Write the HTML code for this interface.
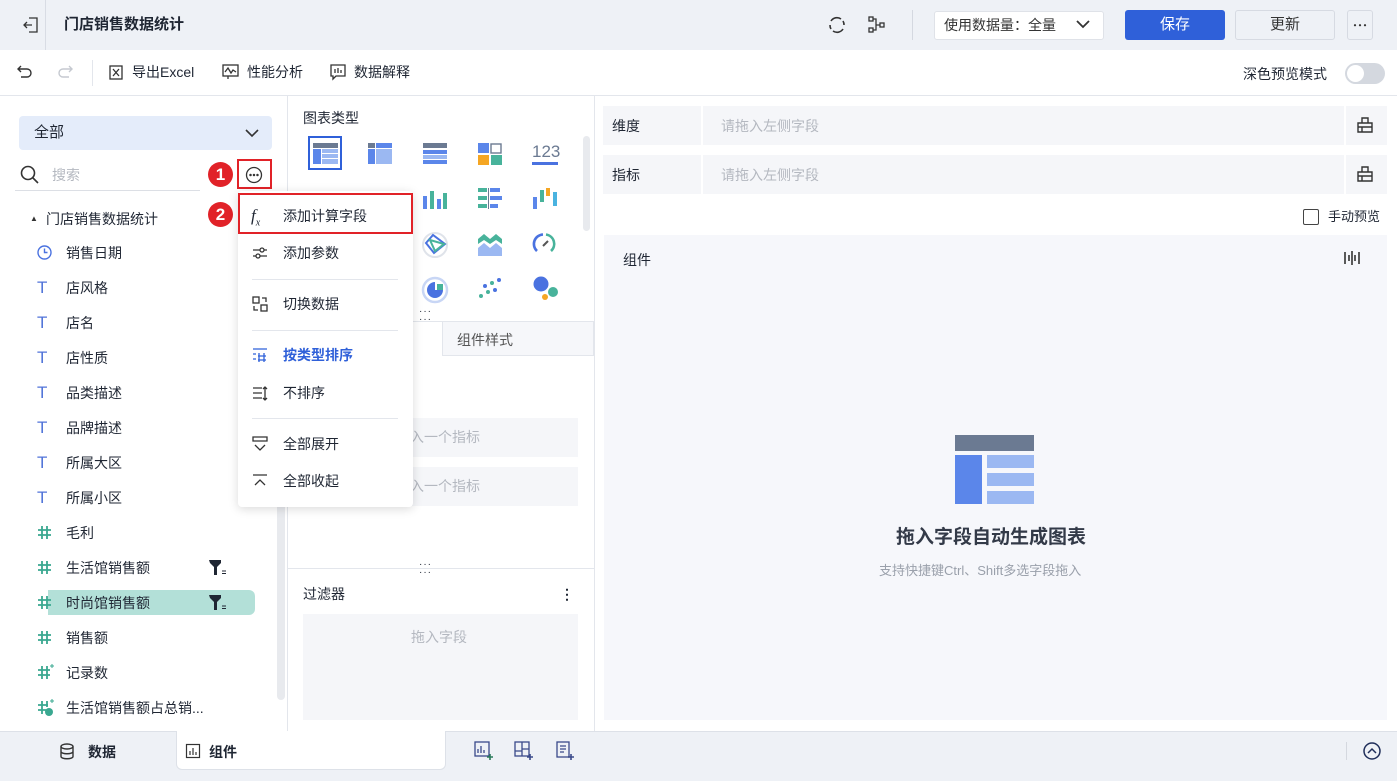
<!DOCTYPE html>
<html><head><meta charset="utf-8"><style>
*{box-sizing:border-box;margin:0;padding:0}
body{width:1397px;height:781px;position:relative;overflow:hidden;background:#fff;font-family:"Liberation Sans","Noto Sans CJK SC",sans-serif;font-size:14px;color:#1f2633}
.a{position:absolute}
.t{position:absolute;white-space:nowrap;line-height:20px}
svg{position:absolute;overflow:visible}
</style></head><body>
<!-- top bar -->
<div class="a" style="left:0;top:0;width:1397px;height:50px;background:#eef1f6"></div>
<svg style="left:22px;top:16px" width="18" height="18" viewBox="0 0 18 18" fill="none" stroke="#333" stroke-width="1.3"><path d="M7 2h8v14H7M2 9h8M5 6L2 9l3 3"/></svg>
<div class="a" style="left:45px;top:0;width:1px;height:50px;background:#d8dce4"></div>
<div class="t" style="left:64px;top:15px;font-weight:bold;font-size:15px">门店销售数据统计</div>
<svg style="left:827px;top:15px" width="20" height="20" viewBox="0 0 20 20" fill="none" stroke="#333" stroke-width="1.6"><path d="M4 6a7 7 0 0 1 10-2M16 14a7 7 0 0 1-10 2M3 10a7 7 0 0 0 1 4M17 10a7 7 0 0 0-1-4"/></svg>
<svg style="left:868px;top:16px" width="18" height="18" viewBox="0 0 18 18" fill="none" stroke="#333" stroke-width="1.3"><rect x="1" y="1" width="4" height="4"/><rect x="1" y="12" width="4" height="4"/><rect x="12" y="7" width="4" height="4"/><path d="M5 3h3v11H5M8 9h4"/></svg>
<div class="a" style="left:912px;top:10px;width:1px;height:30px;background:#d4d8e0"></div>
<div class="a" style="left:934px;top:11px;width:170px;height:29px;background:#fff;border:1px solid #dfe2e8;border-radius:3px"></div>
<div class="t" style="left:944px;top:15px;color:#333">使用数据量：全量</div>
<svg style="left:1076px;top:19px" width="14" height="10" viewBox="0 0 14 10" fill="none" stroke="#333" stroke-width="1.8"><path d="M1 2l6 6 6-6"/></svg>
<div class="a" style="left:1125px;top:10px;width:100px;height:30px;background:#2f60d9;border-radius:3px;color:#fff;text-align:center;line-height:30px;font-size:15px">保存</div>
<div class="a" style="left:1235px;top:10px;width:100px;height:30px;background:#eef1f6;border:1px solid #d6dae2;border-radius:3px;color:#333;text-align:center;line-height:28px;font-size:15px">更新</div>
<div class="a" style="left:1347px;top:10px;width:26px;height:30px;border:1px solid #d6dae2;border-radius:3px"></div>
<svg style="left:1353px;top:24px" width="14" height="3" fill="#333"><circle cx="2" cy="1.2" r="1.1"/><circle cx="7" cy="1.2" r="1.1"/><circle cx="12" cy="1.2" r="1.1"/></svg>
<!-- toolbar -->
<div class="a" style="left:0;top:95px;width:1397px;height:1px;background:#e3e6ec"></div>
<svg style="left:17px;top:65px" width="16" height="14" viewBox="0 0 16 14" fill="none" stroke="#333" stroke-width="1.4"><path d="M4 1L1 4l3 3M1 4h9a4 4 0 0 1 0 8H4"/></svg>
<svg style="left:57px;top:65px" width="16" height="14" viewBox="0 0 16 14" fill="none" stroke="#c5c9d0" stroke-width="1.4"><path d="M12 1l3 3-3 3M15 4H6a4 4 0 0 0 0 8h6"/></svg>
<div class="a" style="left:92px;top:60px;width:1px;height:26px;background:#e3e6ec"></div>
<svg style="left:109px;top:65px" width="14" height="15" viewBox="0 0 14 15" fill="none" stroke="#333" stroke-width="1.3"><rect x="1" y="1" width="12" height="13"/><path d="M4 4l6 7M10 4l-6 7"/></svg>
<div class="t" style="left:132px;top:62px">导出Excel</div>
<svg style="left:222px;top:64px" width="17" height="16" viewBox="0 0 17 16" fill="none" stroke="#333" stroke-width="1.3"><rect x="1" y="1" width="15" height="11"/><path d="M3 8l3-4 3 5 2-3 3 2M6 12v3"/></svg>
<div class="t" style="left:247px;top:62px">性能分析</div>
<svg style="left:330px;top:64px" width="16" height="16" viewBox="0 0 16 16" fill="none" stroke="#333" stroke-width="1.3"><path d="M1 1h14v11H6l-3 3v-3H1z M5 5v4M8 4v5M11 6v3"/></svg>
<div class="t" style="left:354px;top:62px">数据解释</div>
<div class="t" style="left:1243px;top:64px">深色预览模式</div>
<div class="a" style="left:1345px;top:63px;width:40px;height:21px;background:#d4d8df;border-radius:11px"></div>
<div class="a" style="left:1347px;top:65px;width:17px;height:17px;background:#fff;border-radius:50%"></div>
<!-- left panel -->
<div class="a" style="left:19px;top:116px;width:253px;height:34px;background:#e4ecfa;border-radius:4px"></div>
<div class="t" style="left:34px;top:123px;font-size:15px">全部</div>
<svg style="left:245px;top:129px" width="14" height="9" viewBox="0 0 14 9" fill="none" stroke="#333" stroke-width="1.6"><path d="M1 1l6 6 6-6"/></svg>
<svg style="left:20px;top:165px" width="20" height="20" viewBox="0 0 20 20" fill="none" stroke="#333" stroke-width="1.6"><circle cx="8" cy="8" r="6.5"/><path d="M13 13l5 5"/></svg>
<div class="t" style="left:52px;top:165px;color:#b4b8c0">搜索</div>
<div class="a" style="left:15px;top:190px;width:185px;height:1px;background:#dcdfe5"></div>
<div class="a" style="left:237px;top:159px;width:35px;height:30px;border:2px solid #e12228"></div>
<svg style="left:245px;top:166px" width="18" height="18" viewBox="0 0 18 18" fill="none" stroke="#333" stroke-width="1.3"><circle cx="9" cy="9" r="7.5"/><circle cx="5.5" cy="9" r=".6" fill="#333"/><circle cx="9" cy="9" r=".6" fill="#333"/><circle cx="12.5" cy="9" r=".6" fill="#333"/></svg>
<div class="a" style="left:208px;top:162px;width:25px;height:25px;background:#e12228;border-radius:50%;color:#fff;font-weight:bold;text-align:center;line-height:25px;font-size:17px">1</div>
<div class="a" style="left:208px;top:202px;width:25px;height:25px;background:#e12228;border-radius:50%;color:#fff;font-weight:bold;text-align:center;line-height:25px;font-size:17px">2</div>
<div class="t" style="left:30px;top:209px;font-size:8px;color:#333">▲</div>
<div class="t" style="left:46px;top:209px">门店销售数据统计</div>
<svg style="left:37px;top:245px" width="15" height="15" viewBox="0 0 15 15" fill="none" stroke="#4a72e0" stroke-width="1.4"><circle cx="7.5" cy="7.5" r="6.5"/><path d="M7.5 3.5v4h3"/></svg>
<div class="t" style="left:66px;top:243px">销售日期</div>
<div style="position:absolute;left:0;top:278px">
<div class="t" style="left:37px;top:0;color:#5073d8;font-size:17px">T</div><div class="t" style="left:66px;top:0">店风格</div>
<div class="t" style="left:37px;top:35px;color:#5073d8;font-size:17px">T</div><div class="t" style="left:66px;top:35px">店名</div>
<div class="t" style="left:37px;top:70px;color:#5073d8;font-size:17px">T</div><div class="t" style="left:66px;top:70px">店性质</div>
<div class="t" style="left:37px;top:105px;color:#5073d8;font-size:17px">T</div><div class="t" style="left:66px;top:105px">品类描述</div>
<div class="t" style="left:37px;top:140px;color:#5073d8;font-size:17px">T</div><div class="t" style="left:66px;top:140px">品牌描述</div>
<div class="t" style="left:37px;top:175px;color:#5073d8;font-size:17px">T</div><div class="t" style="left:66px;top:175px">所属大区</div>
<div class="t" style="left:37px;top:210px;color:#5073d8;font-size:17px">T</div><div class="t" style="left:66px;top:210px">所属小区</div>
</div>
<div class="a" style="left:48px;top:590px;width:207px;height:25px;background:#b3e0d8;border-radius:0 6px 6px 0"></div>
<svg style="left:38px;top:526px" width="13" height="13" fill="none" stroke="#3aa890" stroke-width="1.8"><path d="M0 4h13M0 9h13M4 0v13M9 0v13"/></svg>
<div class="t" style="left:66px;top:523px">毛利</div>
<svg style="left:38px;top:561px" width="13" height="13" fill="none" stroke="#3aa890" stroke-width="1.8"><path d="M0 4h13M0 9h13M4 0v13M9 0v13"/></svg>
<div class="t" style="left:66px;top:558px">生活馆销售额</div>
<svg style="left:209px;top:560px" width="18" height="16"><path d="M0 0h12v3L8 7v8H5V7L1 3z" fill="#1f2633"/><path d="M13 11h4M13 13.5h4" stroke="#1f2633" stroke-width="1"/></svg>
<svg style="left:38px;top:596px" width="13" height="13" fill="none" stroke="#3aa890" stroke-width="1.8"><path d="M0 4h13M0 9h13M4 0v13M9 0v13"/></svg>
<div class="t" style="left:66px;top:593px">时尚馆销售额</div>
<svg style="left:209px;top:595px" width="18" height="16"><path d="M0 0h12v3L8 7v8H5V7L1 3z" fill="#1f2633"/><path d="M13 11h4M13 13.5h4" stroke="#1f2633" stroke-width="1"/></svg>
<svg style="left:38px;top:631px" width="13" height="13" fill="none" stroke="#3aa890" stroke-width="1.8"><path d="M0 4h13M0 9h13M4 0v13M9 0v13"/></svg>
<div class="t" style="left:66px;top:628px">销售额</div>
<svg style="left:38px;top:666px" width="16" height="13" fill="none" stroke="#3aa890" stroke-width="1.8"><path d="M0 4h12M0 9h12M4 0v13M9 0v13"/><path d="M14 -2v4M12 0h4" stroke-width="1"/></svg>
<div class="t" style="left:66px;top:663px">记录数</div>
<svg style="left:38px;top:701px" width="16" height="15" fill="none" stroke="#3aa890" stroke-width="1.8"><path d="M0 4h10M0 9h8M4 0v13M9 0v6"/><path d="M14 -2v4M12 0h4" stroke-width="1"/><circle cx="11" cy="11" r="4" fill="#3aa890" stroke="none"/></svg>
<div class="t" style="left:66px;top:698px">生活馆销售额占总销...</div>
<div class="a" style="left:277px;top:195px;width:8px;height:505px;background:#e8eaee;border-radius:4px"></div>
<div class="a" style="left:287px;top:96px;width:1px;height:635px;background:#e3e6ec"></div>
<!-- middle -->
<div class="t" style="left:303px;top:108px">图表类型</div>
<div class="a" style="left:308px;top:136px;width:34px;height:34px;border:2px solid #2f60d9"></div>
<svg style="left:313px;top:143px" width="25" height="21"><rect width="25" height="5" fill="#6b7a92"/><rect y="6" width="8" height="15" fill="#5b86ea"/><rect x="9" y="6" width="16" height="4" fill="#9bb8f2"/><rect x="9" y="11" width="16" height="4" fill="#9bb8f2"/><rect x="9" y="16" width="16" height="5" fill="#9bb8f2"/></svg>
<svg style="left:368px;top:143px" width="24" height="21"><rect width="7" height="5" fill="#6b7a92"/><rect x="8" width="16" height="5" fill="#5b86ea"/><rect y="6" width="7" height="15" fill="#5b86ea"/><rect x="8" y="6" width="16" height="15" fill="#9bb8f2"/></svg>
<svg style="left:423px;top:143px" width="24" height="21"><rect width="24" height="5" fill="#6b7a92"/><rect y="7" width="24" height="4" fill="#5b86ea"/><rect y="12" width="24" height="4" fill="#9bb8f2"/><rect y="17" width="24" height="4" fill="#5b86ea"/></svg>
<svg style="left:478px;top:143px" width="24" height="22"><rect width="11" height="10" fill="#5b86ea"/><rect x="13" y="1" width="10" height="9" fill="#fff" stroke="#6b7a92" stroke-width="1.4"/><rect y="12" width="11" height="10" fill="#f5a623"/><rect x="13" y="12" width="11" height="10" fill="#48b39b"/></svg>
<div class="t" style="left:532px;top:142px;color:#6b7a92;font-size:17px">123</div>
<div class="a" style="left:532px;top:162px;width:26px;height:3px;background:#4a72e0"></div>
<svg style="left:423px;top:188px" width="24" height="21"><rect x="0" y="8" width="4" height="13" fill="#5b86ea"/><rect x="7" y="3" width="4" height="18" fill="#48b39b"/><rect x="14" y="11" width="4" height="10" fill="#5b86ea"/><rect x="20" y="5" width="4" height="16" fill="#48b39b"/></svg>
<svg style="left:478px;top:188px" width="24" height="21"><rect x="0" y="0" width="9" height="4" fill="#48b39b"/><rect x="12" y="0" width="10" height="4" fill="#5b86ea"/><rect x="0" y="8" width="9" height="4" fill="#48b39b"/><rect x="12" y="8" width="12" height="4" fill="#5b86ea"/><rect x="0" y="16" width="9" height="4" fill="#48b39b"/><rect x="12" y="16" width="8" height="4" fill="#5b86ea"/><rect x="10" y="0" width="1" height="21" fill="#6b7a92"/></svg>
<svg style="left:533px;top:188px" width="24" height="21"><rect x="0" y="9" width="4" height="12" fill="#5b86ea"/><rect x="7" y="2" width="4" height="12" fill="#48b39b"/><rect x="13" y="0" width="4" height="8" fill="#f5a623"/><rect x="20" y="4" width="4" height="14" fill="#4ab3e0"/></svg>
<svg style="left:421px;top:231px" width="28" height="28" fill="none" stroke-width="2"><circle cx="14" cy="14" r="12" stroke="#dfe3ea"/><path d="M5 12L12 4l12 9-11 9z" stroke="#4a72e0"/><path d="M9 9l14 4-9 7z" stroke="#48b39b"/></svg>
<svg style="left:477px;top:232px" width="26" height="24"><path d="M1 7l6-5 6 5 6-5 6 5v5l-6-4-6 4-6-4-6 4z" fill="#48b39b"/><path d="M1 16l6-5 6 5 6-5 6 5v8H1z" fill="#9bb8f2"/></svg>
<svg style="left:531px;top:231px" width="26" height="26" fill="none" stroke-width="2.6"><path d="M6 20A9.5 9.5 0 0 1 12 3.5" stroke="#4a72e0"/><path d="M15 3.5A9.5 9.5 0 0 1 20 20" stroke="#48b39b"/><path d="M12 15l5-5" stroke="#555" stroke-width="2"/></svg>
<svg style="left:421px;top:276px" width="28" height="28"><circle cx="14" cy="14" r="12" fill="none" stroke="#c8d6f5" stroke-width="2.5"/><path d="M14 6a8 8 0 1 0 8 8h-8z" fill="#4a72e0"/><path d="M16 8h6v6h-6z" fill="#48b39b"/></svg>
<svg style="left:478px;top:277px" width="24" height="22"><circle cx="21" cy="3" r="2" fill="#4a72e0"/><circle cx="14" cy="6" r="2" fill="#48b39b"/><circle cx="7" cy="9" r="2" fill="#4a72e0"/><circle cx="17" cy="13" r="2" fill="#4a72e0"/><circle cx="10" cy="15" r="2" fill="#48b39b"/><circle cx="3" cy="19" r="2" fill="#48b39b"/></svg>
<svg style="left:533px;top:276px" width="26" height="26"><circle cx="8" cy="8" r="7.5" fill="#4a72e0"/><circle cx="20" cy="16" r="5" fill="#48b39b"/><circle cx="12" cy="21" r="3" fill="#f5a623"/></svg>
<div class="a" style="left:583px;top:136px;width:7px;height:95px;background:#e8eaee;border-radius:4px"></div>
<div class="a" style="left:288px;top:321px;width:306px;height:1px;background:#e3e6ec"></div>
<div class="t" style="left:419px;top:308px;font-size:10px;letter-spacing:1px;line-height:8px">···<br>···</div>
<div class="a" style="left:442px;top:322px;width:152px;height:34px;background:#f6f7fa;border:1px solid #e3e6ec;border-top:none"></div>
<div class="t" style="left:457px;top:330px;color:#555">组件样式</div>
<div class="a" style="left:303px;top:418px;width:275px;height:39px;background:#f5f6f9"></div>
<div class="t" style="left:410px;top:427px;color:#b4b8c0">入一个指标</div>
<div class="a" style="left:303px;top:467px;width:275px;height:39px;background:#f5f6f9"></div>
<div class="t" style="left:410px;top:476px;color:#b4b8c0">入一个指标</div>
<div class="a" style="left:288px;top:568px;width:306px;height:1px;background:#e3e6ec"></div>
<div class="t" style="left:419px;top:561px;font-size:10px;letter-spacing:1px;line-height:8px">···<br>···</div>
<div class="t" style="left:303px;top:584px">过滤器</div>
<div class="t" style="left:560px;top:584px;font-weight:bold">⋮</div>
<div class="a" style="left:303px;top:614px;width:275px;height:106px;background:#f5f6f9"></div>
<div class="t" style="left:411px;top:627px;color:#b4b8c0">拖入字段</div>
<div class="a" style="left:594px;top:96px;width:1px;height:635px;background:#e3e6ec"></div>
<!-- right panel -->
<div class="a" style="left:603px;top:106px;width:784px;height:39px;background:#f5f6f9"></div>
<div class="a" style="left:701px;top:106px;width:2px;height:39px;background:#fff"></div>
<div class="a" style="left:1344px;top:106px;width:2px;height:39px;background:#fff"></div>
<div class="t" style="left:612px;top:116px">维度</div>
<div class="t" style="left:721px;top:116px;color:#b4b8c0">请拖入左侧字段</div>
<div class="a" style="left:603px;top:155px;width:784px;height:39px;background:#f5f6f9"></div>
<div class="a" style="left:701px;top:155px;width:2px;height:39px;background:#fff"></div>
<div class="a" style="left:1344px;top:155px;width:2px;height:39px;background:#fff"></div>
<div class="t" style="left:612px;top:165px">指标</div>
<div class="t" style="left:721px;top:165px;color:#b4b8c0">请拖入左侧字段</div>
<svg style="left:1357px;top:117px" width="16" height="16" fill="none" stroke="#333" stroke-width="1.4"><path d="M1 6h14v9H1zM5 6V1h6v5M1 10h14M5 10v5"/></svg>
<svg style="left:1357px;top:166px" width="16" height="16" fill="none" stroke="#333" stroke-width="1.4"><path d="M1 6h14v9H1zM5 6V1h6v5M1 10h14M5 10v5"/></svg>
<div class="a" style="left:1303px;top:209px;width:16px;height:16px;border:1.3px solid #444;border-radius:2px"></div>
<div class="t" style="left:1328px;top:207px;font-size:13px">手动预览</div>
<div class="a" style="left:604px;top:235px;width:783px;height:485px;background:#f6f7fb"></div>
<div class="t" style="left:623px;top:250px">组件</div>
<svg style="left:1344px;top:250px" width="16" height="16" stroke="#333" stroke-width="1.6"><path d="M1 2v12M5 5v6M8 1v14M11 5v6M15 2v12"/></svg>
<svg style="left:955px;top:435px" width="80" height="70"><rect width="79" height="16" fill="#6b7a92"/><rect y="20" width="27" height="49" fill="#5b86ea"/><rect x="32" y="20" width="47" height="13" fill="#9bb8f2"/><rect x="32" y="38" width="47" height="13" fill="#9bb8f2"/><rect x="32" y="56" width="47" height="13" fill="#9bb8f2"/></svg>
<div class="t" style="left:896px;top:527px;font-size:19px;font-weight:bold;color:#333a48;line-height:22px">拖入字段自动生成图表</div>
<div class="t" style="left:879px;top:561px;font-size:13px;color:#9aa0ab">支持快捷键Ctrl、Shift多选字段拖入</div>
<!-- bottom bar -->
<div class="a" style="left:0;top:731px;width:1397px;height:50px;background:#eef1f6;border-top:1px solid #dde1e8"></div>
<svg style="left:60px;top:743px" width="14" height="17" fill="none" stroke="#333" stroke-width="1.4"><ellipse cx="7" cy="3.5" rx="6" ry="2.5"/><path d="M1 3.5v10c0 3 12 3 12 0v-10M1 8.5c0 3 12 3 12 0"/></svg>
<div class="t" style="left:88px;top:742px;font-weight:bold">数据</div>
<div class="a" style="left:176px;top:731px;width:270px;height:39px;background:#fff;border:1px solid #dde1e8;border-top:none;border-radius:0 0 6px 6px"></div>
<svg style="left:186px;top:744px" width="14" height="14" fill="none" stroke="#333" stroke-width="1.2"><rect x=".5" y=".5" width="13" height="13"/><path d="M4 11V7M7 11V4M10 11V8"/></svg>
<div class="t" style="left:209px;top:742px;font-weight:bold">组件</div>
<svg style="left:474px;top:741px" width="20" height="20" fill="none" stroke="#3a4a8a" stroke-width="1.3"><rect x="1" y="1" width="14" height="14"/><path d="M4 12V8M7 12V5M10 12V9"/><path d="M16 13v6M13 16h6" stroke="#2a7a5a" stroke-width="1.6"/></svg>
<svg style="left:514px;top:741px" width="20" height="20" fill="none" stroke="#3a4a8a" stroke-width="1.3"><rect x="1" y="1" width="14" height="14"/><path d="M8 1v14M8 8h7M1 10h7"/><path d="M16 13v6M13 16h6" stroke="#3a4a8a" stroke-width="1.6"/></svg>
<svg style="left:556px;top:741px" width="20" height="20" fill="none" stroke="#3a4a8a" stroke-width="1.3"><rect x="1" y="1" width="12" height="15"/><path d="M4 5h6M4 8h6M4 11h4"/><path d="M15 13v6M12 16h6" stroke="#3a4a8a" stroke-width="1.6"/></svg>
<div class="a" style="left:1346px;top:742px;width:1px;height:18px;background:#d4d8df"></div>
<svg style="left:1363px;top:742px" width="18" height="18" fill="none" stroke="#1f2e5a" stroke-width="1.5"><circle cx="9" cy="9" r="8"/><path d="M5 11l4-4 4 4"/></svg>
<!-- popup menu -->
<div class="a" style="left:238px;top:191px;width:175px;height:316px;background:#fff;border-radius:4px;box-shadow:0 2px 10px rgba(0,0,0,.15)"></div>
<div class="a" style="left:238px;top:193px;width:175px;height:41px;border:2px solid #e12228"></div>
<div class="t" style="left:251px;top:206px;font-style:italic;font-family:'Liberation Serif',serif;font-size:17px">f<sub style="font-size:10px">x</sub></div>
<div class="t" style="left:283px;top:206px">添加计算字段</div>
<svg style="left:252px;top:246px" width="16" height="14" fill="none" stroke="#333" stroke-width="1.3"><path d="M1 4h14M1 10h14"/><circle cx="10" cy="4" r="2" fill="#fff"/><circle cx="6" cy="10" r="2" fill="#fff"/></svg>
<div class="t" style="left:283px;top:243px">添加参数</div>
<div class="a" style="left:252px;top:279px;width:146px;height:1px;background:#e3e6ec"></div>
<svg style="left:252px;top:296px" width="16" height="16" fill="none" stroke="#333" stroke-width="1.3"><rect x="1" y="1" width="6" height="6"/><rect x="9" y="9" width="6" height="6"/><path d="M10 2h4v4M6 14H2v-4"/></svg>
<div class="t" style="left:283px;top:294px">切换数据</div>
<div class="a" style="left:252px;top:330px;width:146px;height:1px;background:#e3e6ec"></div>
<svg style="left:252px;top:348px" width="16" height="14" fill="none" stroke="#2f60d9" stroke-width="1.3"><path d="M1 1h14M1 6h3M1 11h3M7 5v9M12 5v9M6 8h8M6 12h8"/></svg>
<div class="t" style="left:283px;top:345px;color:#2f60d9;font-weight:bold">按类型排序</div>
<svg style="left:252px;top:386px" width="16" height="15" fill="none" stroke="#333" stroke-width="1.3"><path d="M1 2h9M1 7h9M1 12h9M13 1v13M11 3l2-2 2 2M11 12l2 2 2-2"/></svg>
<div class="t" style="left:283px;top:383px">不排序</div>
<div class="a" style="left:252px;top:418px;width:146px;height:1px;background:#e3e6ec"></div>
<svg style="left:252px;top:436px" width="16" height="16" fill="none" stroke="#333" stroke-width="1.3"><path d="M1 1h14v4H1zM3 9l5 5 5-5"/></svg>
<div class="t" style="left:283px;top:434px">全部展开</div>
<svg style="left:252px;top:474px" width="16" height="14" fill="none" stroke="#333" stroke-width="1.3"><path d="M1 1h14M3 11l5-5 5 5"/></svg>
<div class="t" style="left:283px;top:471px">全部收起</div>
</body></html>
